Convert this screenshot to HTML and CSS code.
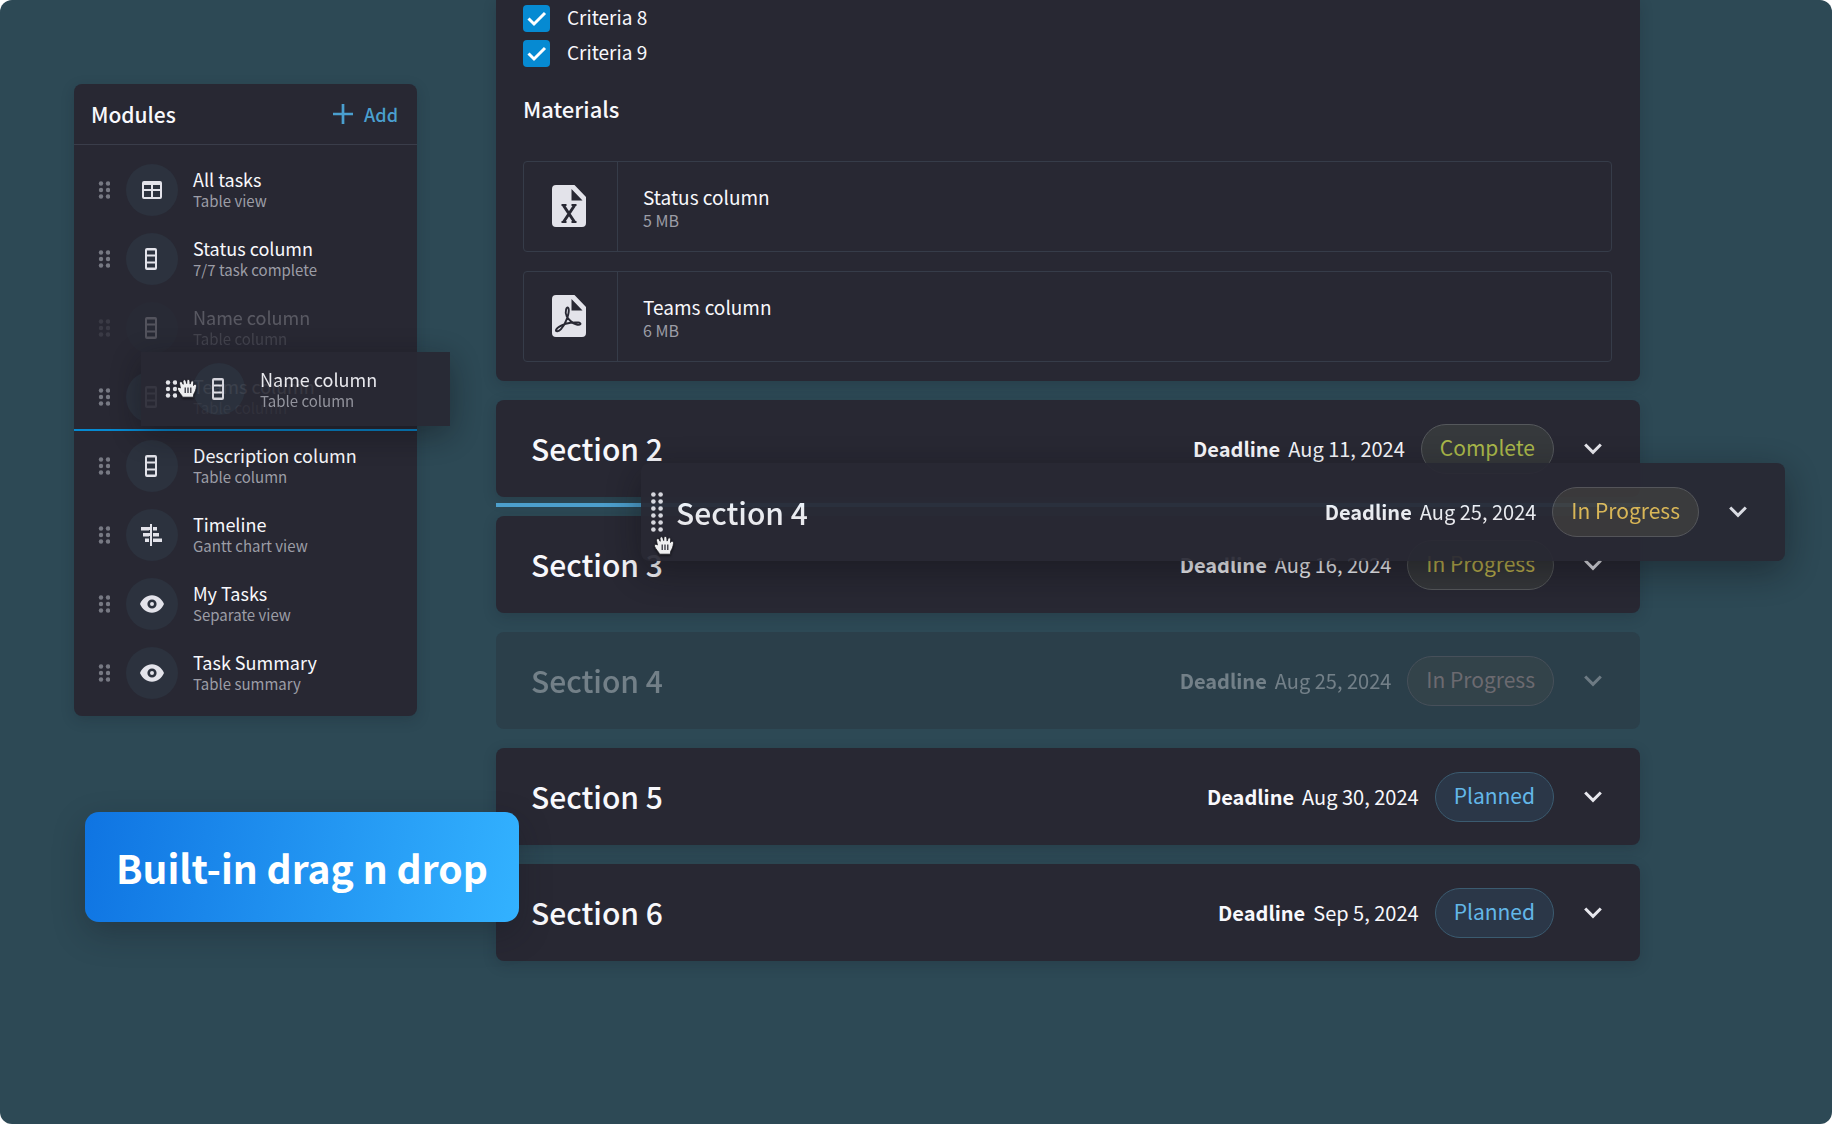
FILE: index.html
```html
<!DOCTYPE html>
<html lang="en">
<head>
<meta charset="utf-8">
<meta name="viewport" content="width=device-width, initial-scale=1">
<title>Modules and sections</title>
<link rel="stylesheet" href="styles.css">
</head>
<body>
<svg class="sprite" aria-hidden="true">
  <symbol id="grip" viewBox="0 0 12 18">
    <circle cx="3" cy="2.5" r="2.2"/><circle cx="10" cy="2.5" r="2.2"/>
    <circle cx="3" cy="9" r="2.2"/><circle cx="10" cy="9" r="2.2"/>
    <circle cx="3" cy="15.5" r="2.2"/><circle cx="10" cy="15.5" r="2.2"/>
  </symbol>
  <symbol id="grip-tall" viewBox="0 0 12 40">
    <circle cx="2.4" cy="2.5" r="2.3"/><circle cx="9.6" cy="2.5" r="2.3"/>
    <circle cx="2.4" cy="9.5" r="2.3"/><circle cx="9.6" cy="9.5" r="2.3"/>
    <circle cx="2.4" cy="16.5" r="2.3"/><circle cx="9.6" cy="16.5" r="2.3"/>
    <circle cx="2.4" cy="23.5" r="2.3"/><circle cx="9.6" cy="23.5" r="2.3"/>
    <circle cx="2.4" cy="30.5" r="2.3"/><circle cx="9.6" cy="30.5" r="2.3"/>
    <circle cx="2.4" cy="37.5" r="2.3"/><circle cx="9.6" cy="37.5" r="2.3"/>
  </symbol>
  <symbol id="table" viewBox="0 0 24 24">
    <path fill-rule="evenodd" d="M4 3h16a2 2 0 0 1 2 2v14a2 2 0 0 1-2 2H4a2 2 0 0 1-2-2V5a2 2 0 0 1 2-2zm0 4v4h7V7zm9 0v4h7V7zm-9 6v6h7v-6zm9 0v6h7v-6z"/>
  </symbol>
  <symbol id="column" viewBox="0 0 24 24">
    <path fill-rule="evenodd" d="M7 1h8a2 2 0 0 1 2 2v18a2 2 0 0 1-2 2H7a2 2 0 0 1-2-2V3a2 2 0 0 1 2-2zm0 2.5v4h8v-4zm0 6v5h8v-5zm0 7v4h8v-4z"/>
  </symbol>
  <symbol id="timeline" viewBox="0 0 24 24">
    <path d="M10 1h2v22h-2zM1 4h8v3.500H1zM13 4h4v3.500h-4zM3 10h6v3.500H3zM13 10h6v3.500h-6zM5 15.500h4V19H5zM13 15.500h9V19h-9z"/>
    <path d="M8 4h3v3H8zM8 10h3v3H8z"/>
  </symbol>
  <symbol id="eye" viewBox="0 0 24 24">
    <path d="M12 3.300C6.500 3.300 2.200 6.800 0 12c2.200 5.200 6.500 8.700 12 8.700s9.800-3.500 12-8.700c-2.200-5.200-6.500-8.700-12-8.700z"/>
    <circle class="iris" cx="12" cy="12" r="3.300"/>
  </symbol>
  <symbol id="chevron" viewBox="0 0 18 12">
    <path fill="none" stroke="currentColor" stroke-width="3" d="M1.200 1.500 9 9.300l7.800-7.800"/>
  </symbol>
  <symbol id="file" viewBox="0 0 34 42">
    <path fill-rule="evenodd" d="M4 0h18.500L34 12v26a4 4 0 0 1-4 4H4a4 4 0 0 1-4-4V4a4 4 0 0 1 4-4zm15.500 4v11.500H30.500z"/>
  </symbol>
  <symbol id="hand" viewBox="0 0 20 19">
    <path stroke="#17171e" stroke-width=".8" d="M5.500 18.200c-.5-2.300-4.100-5.100-5-8-.5-1.800 1.400-2.700 2.900-1.200L2.500 4.500c-.3-2 2-2.500 2.800-.9l.9 1.700-.2-3c0-1.900 2.300-2.200 2.900-.4l.8 2.700.2-2.900c.3-1.800 2.500-1.700 2.900.1l.3 3.300.9-2.400c.8-1.500 2.600-.9 2.600.8l-.1 3 .9-.9c1-.8 2.300 0 2.100 1.700-.4 3.500-1.400 5.700-2.800 8l-.3 2.900z"/>
    <path fill="none" stroke="#22222c" stroke-width="1.200" d="M8.200 8.500V14M11 8.500V14M13.800 8.500V14"/>
  </symbol>
</svg>

<div class="stage">
  <aside class="modules">
    <header class="modules-head">
      <h2>Modules</h2>
      <button class="add" type="button">
        <svg width="20" height="20" viewBox="0 0 20 20" aria-hidden="true"><path stroke="currentColor" stroke-width="2.700" d="M10 0v20M0 10h20"/></svg>
        Add
      </button>
    </header>
    <ul class="module-list">
      <li class="module">
        <svg class="grip"><use href="#grip"/></svg>
        <span class="badge"><svg><use href="#table"/></svg></span>
        <div><p class="name">All tasks</p><p class="sub">Table view</p></div>
      </li>
      <li class="module">
        <svg class="grip"><use href="#grip"/></svg>
        <span class="badge"><svg><use href="#column"/></svg></span>
        <div><p class="name">Status column</p><p class="sub">7/7 task complete</p></div>
      </li>
      <li class="module module-origin">
        <svg class="grip"><use href="#grip"/></svg>
        <span class="badge"><svg><use href="#column"/></svg></span>
        <div><p class="name">Name column</p><p class="sub">Table column</p></div>
      </li>
      <li class="module drop-after">
        <svg class="grip"><use href="#grip"/></svg>
        <span class="badge"><svg><use href="#column"/></svg></span>
        <div><p class="name">Teams column</p><p class="sub">Table column</p></div>
      </li>
      <li class="module">
        <svg class="grip"><use href="#grip"/></svg>
        <span class="badge"><svg><use href="#column"/></svg></span>
        <div><p class="name">Description column</p><p class="sub">Table column</p></div>
      </li>
      <li class="module">
        <svg class="grip"><use href="#grip"/></svg>
        <span class="badge"><svg><use href="#timeline"/></svg></span>
        <div><p class="name">Timeline</p><p class="sub">Gantt chart view</p></div>
      </li>
      <li class="module">
        <svg class="grip"><use href="#grip"/></svg>
        <span class="badge"><svg><use href="#eye"/></svg></span>
        <div><p class="name">My Tasks</p><p class="sub">Separate view</p></div>
      </li>
      <li class="module">
        <svg class="grip"><use href="#grip"/></svg>
        <span class="badge"><svg><use href="#eye"/></svg></span>
        <div><p class="name">Task Summary</p><p class="sub">Table summary</p></div>
      </li>
    </ul>
    <div class="module module-dragged">
      <svg class="grip"><use href="#grip"/></svg>
      <span class="badge"><svg><use href="#column"/></svg></span>
      <div><p class="name">Name column</p><p class="sub">Table column</p></div>
      <svg class="cursor"><use href="#hand"/></svg>
    </div>
  </aside>

  <main class="sections">
    <section class="details">
      <label class="criterion"><input type="checkbox" checked><span>Criteria 8</span></label>
      <label class="criterion"><input type="checkbox" checked><span>Criteria 9</span></label>
      <h3>Materials</h3>
      <div class="files">
        <article class="file">
          <div class="file-icon">
            <svg width="34" height="42" viewBox="0 0 34 42"><use href="#file"/><path class="ink" stroke-width="3" d="M11.500 20.500 22.500 37M22.500 20.500 11.500 37"/><path class="ink" stroke-width="1.800" d="M9.500 20h5M19.500 20h5M9.500 37h5M19.500 37h5"/></svg>
          </div>
          <div class="file-text"><p class="file-name">Status column</p><p class="file-size">5 MB</p></div>
        </article>
        <article class="file">
          <div class="file-icon">
            <svg width="34" height="42" viewBox="0 0 34 42"><use href="#file"/><path class="ink" stroke-width="1.900" d="M14.800 21.500c-2.600-5 .2-11.500 1.700-8.200 1.300 4-2.300 15.200-7.500 20.800-2.500 2.600-5.600 2.900-5 .9.900-3.200 8-6.300 14.500-7.200 6.200-.9 11-.2 9.800 1.400-1.300 1.600-7-.1-9.800-3.200-1.700-1.800-2.900-3.200-3.700-4.500z"/></svg>
          </div>
          <div class="file-text"><p class="file-name">Teams column</p><p class="file-size">6 MB</p></div>
        </article>
      </div>
    </section>

    <section class="section">
      <h2>Section 2</h2>
      <p class="deadline"><b>Deadline</b><time>Aug 11, 2024</time></p>
      <span class="pill complete">Complete</span>
      <button class="toggle" type="button" aria-label="Expand Section 2"><svg><use href="#chevron"/></svg></button>
    </section>
    <section class="section drop-before">
      <h2>Section 3</h2>
      <p class="deadline"><b>Deadline</b><time>Aug 16, 2024</time></p>
      <span class="pill progress-soft">In Progress</span>
      <button class="toggle" type="button" aria-label="Expand Section 3"><svg><use href="#chevron"/></svg></button>
    </section>
    <section class="section section-origin">
      <h2>Section 4</h2>
      <p class="deadline"><b>Deadline</b><time>Aug 25, 2024</time></p>
      <span class="pill progress-faded">In Progress</span>
      <button class="toggle" type="button" aria-label="Expand Section 4"><svg><use href="#chevron"/></svg></button>
    </section>
    <section class="section">
      <h2>Section 5</h2>
      <p class="deadline"><b>Deadline</b><time>Aug 30, 2024</time></p>
      <span class="pill planned">Planned</span>
      <button class="toggle" type="button" aria-label="Expand Section 5"><svg><use href="#chevron"/></svg></button>
    </section>
    <section class="section">
      <h2>Section 6</h2>
      <p class="deadline"><b>Deadline</b><time>Sep 5, 2024</time></p>
      <span class="pill planned">Planned</span>
      <button class="toggle" type="button" aria-label="Expand Section 6"><svg><use href="#chevron"/></svg></button>
    </section>

    <div class="section section-dragged">
      <svg class="grip-tall"><use href="#grip-tall"/></svg>
      <h2>Section 4</h2>
      <p class="deadline"><b>Deadline</b><time>Aug 25, 2024</time></p>
      <span class="pill progress">In Progress</span>
      <button class="toggle" type="button" aria-label="Expand dragged Section 4"><svg><use href="#chevron"/></svg></button>
      <svg class="cursor"><use href="#hand"/></svg>
    </div>
  </main>

  <p class="banner">Built-in drag n drop</p>
</div>
</body>
</html>
```
FILE: styles.css
```css
:root {
  --page: #2d4955;
  --card: #282833;
  --line: #363c49;
  --text: #f8f8fc;
  --muted: #9c9da6;
  --icon: #e3e3ea;
  --accent: #068ad2;
}

* { box-sizing: border-box; }

body {
  margin: 0;
  background: #fff;
  color: var(--text);
  font: 400 18px/22px "Noto Sans CJK SC", "Noto Sans", sans-serif;
}

h2, h3, p, ul { margin: 0; padding: 0; }
svg { display: block; fill: currentColor; flex: none; }
button { border: 0; padding: 0; background: none; color: inherit; font: inherit; }

.sprite { position: absolute; width: 0; height: 0; }

.stage {
  position: relative;
  display: grid;
  grid-template-columns: 343px minmax(0, 1fr);
  column-gap: 79px;
  align-items: start;
  min-height: 100vh;
  padding: 0 192px 80px 74px;
  border-radius: 12px;
  background: var(--page);
  overflow: hidden;
}

/* Modules panel */
.modules {
  position: relative;
  margin-top: 84px;
  border-radius: 8px;
  background: var(--card);
  box-shadow: 0 4px 14px rgba(20, 24, 34, .2);
}

.modules-head {
  display: flex;
  align-items: center;
  justify-content: space-between;
  height: 61px;
  padding: 0 19px 0 17px;
  border-bottom: 1px solid #3a3d4a;
}

.modules-head h2 { font-size: 21px; line-height: 28px; font-weight: 500; }

.add {
  display: flex;
  align-items: center;
  gap: 11px;
  color: #4a9fcf;
  font-weight: 500;
}

.module-list { list-style: none; padding: 10px 0 9px; }

.module {
  position: relative;
  display: flex;
  align-items: center;
  height: 69px;
  padding-left: 24px;
}

.grip { width: 12px; height: 18px; margin-right: 16px; color: #777983; }

.badge {
  display: grid;
  place-items: center;
  width: 52px;
  height: 52px;
  margin-right: 15px;
  border-radius: 50%;
  background: #2c323e;
  color: var(--icon);
}

.badge svg { width: 24px; height: 24px; }
.iris { fill: none; stroke: #2c323e; stroke-width: 2.6px; }

.name { line-height: 22px; }
.sub { color: var(--muted); font-size: 15px; line-height: 21px; }

.module-origin > * { opacity: .23; }

.drop-after::after {
  content: "";
  position: absolute;
  left: 0;
  right: 0;
  bottom: 0;
  height: 2px;
  background: var(--accent);
}

.module-dragged {
  position: absolute;
  left: 67px;
  top: 268px;
  width: 309px;
  height: 74px;
  background: var(--card);
  box-shadow: 0 8px 32px rgba(10, 10, 16, .45);
  opacity: .92;
}

.module-dragged .grip { color: #f4f4f8; }

.cursor {
  position: absolute;
  width: 20px;
  height: 19px;
  color: #fff;
  filter: drop-shadow(0 1px 1px rgba(0, 0, 0, .6));
}

.module-dragged .cursor { left: 36px; top: 27px; }

/* Sections */
.sections {
  position: relative;
  display: flex;
  flex-direction: column;
  gap: 19px;
}

.details {
  padding: 5px 28px 19px 27px;
  border-radius: 0 0 8px 8px;
  background: var(--card);
  box-shadow: 0 4px 14px rgba(20, 24, 34, .2);
}

.criterion {
  display: flex;
  align-items: flex-start;
  gap: 17px;
  font-size: 19px;
  line-height: 23px;
}

.criterion + .criterion { margin-top: 8px; }

.criterion input {
  appearance: none;
  width: 27px;
  height: 27px;
  margin: 0;
  border-radius: 4px;
  background: var(--accent) url("data:image/svg+xml,%3Csvg xmlns='http://www.w3.org/2000/svg' viewBox='0 0 27 27'%3E%3Cpath d='M5.500 13.500l5.500 5.500L22 8' fill='none' stroke='%23fff' stroke-width='3'/%3E%3C/svg%3E");
}

.details h3 {
  margin: 25px 0 37px;
  font-size: 22px;
  line-height: 32px;
  font-weight: 500;
}

.files { display: grid; gap: 19px; }

.file {
  display: flex;
  height: 91px;
  border: 1px solid var(--line);
  border-radius: 4px;
}

.file-icon {
  display: grid;
  place-items: center;
  width: 94px;
  padding: 0 3px 1px 0;
  border-right: 1px solid var(--line);
  color: var(--icon);
}

.ink { fill: none; stroke: var(--card); }

.file-text { align-self: center; padding: 1px 0 0 25px; }
.file-name { font-size: 19px; line-height: 25px; }
.file-size { color: var(--muted); font-size: 16px; line-height: 22px; }

.section {
  position: relative;
  display: flex;
  align-items: center;
  height: 97px;
  padding: 0 38px 0 35px;
  border-radius: 8px;
  background: var(--card);
  box-shadow: 0 4px 14px rgba(20, 24, 34, .2);
}

.section h2 {
  flex: 1;
  padding-bottom: 1px;
  font-size: 30px;
  line-height: 40px;
  font-weight: 500;
}

.deadline {
  display: flex;
  gap: 8px;
  margin-right: 16px;
  font-size: 20px;
  line-height: 28px;
}

.pill {
  height: 50px;
  padding: 0 18px;
  border: 1px solid;
  border-radius: 25px;
  font-size: 21px;
  line-height: 45px;
}

.complete { background: #36393c; border-color: #55585c; color: #aab84a; }
.progress { background: #3c3b3c; border-color: #58585c; color: #e6bf58; }
.progress-soft { background: #35373a; border-color: #55585a; color: #c0b44c; }
.progress-faded { background: #33434a; border-color: #47505a; color: #6c6a70; }
.planned { background: #2b3748; border-color: #3b5b70; color: #63b7e8; }

.toggle { margin-left: 30px; color: #e8e8ee; }
.toggle svg { width: 18px; height: 12px; }

.section-origin { background: rgba(40, 40, 51, .3); box-shadow: none; }
.section-origin > :not(.pill) { opacity: .35; }

.drop-before::before {
  content: "";
  position: absolute;
  left: 0;
  right: 0;
  top: -13px;
  height: 4px;
  background: #4c9fcc;
}

.section-dragged {
  position: absolute;
  left: 145px;
  top: 463px;
  width: 100%;
  height: 98px;
  padding-left: 10px;
  box-shadow: 0 10px 36px rgba(10, 10, 16, .45);
  opacity: .93;
}

.grip-tall { width: 12px; height: 40px; margin-right: 13px; color: #e4e4ea; }
.section-dragged .cursor { left: 13px; top: 73px; }

.banner {
  position: absolute;
  left: 85px;
  top: 812px;
  padding: 0 31px;
  border-radius: 14px;
  background: linear-gradient(100deg, #0f74e2, #33b2ff);
  box-shadow: 0 12px 32px rgba(20, 24, 34, .3);
  color: #fff;
  font-size: 39px;
  line-height: 110px;
  font-weight: 700;
}
```
